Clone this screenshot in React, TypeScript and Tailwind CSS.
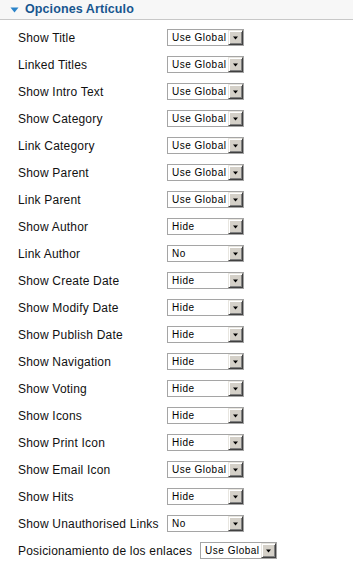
import * as React from 'react';

const rows: [string, string][] = [
    ['Show Title', 'Use Global'],
    ['Linked Titles', 'Use Global'],
    ['Show Intro Text', 'Use Global'],
    ['Show Category', 'Use Global'],
    ['Link Category', 'Use Global'],
    ['Show Parent', 'Use Global'],
    ['Link Parent', 'Use Global'],
    ['Show Author', 'Hide'],
    ['Link Author', 'No'],
    ['Show Create Date', 'Hide'],
    ['Show Modify Date', 'Hide'],
    ['Show Publish Date', 'Hide'],
    ['Show Navigation', 'Hide'],
    ['Show Voting', 'Hide'],
    ['Show Icons', 'Hide'],
    ['Show Print Icon', 'Hide'],
    ['Show Email Icon', 'Use Global'],
    ['Show Hits', 'Hide'],
    ['Show Unauthorised Links', 'No'],
];

function Select({ value }: { value: string }) {
    return (
        <div className="flex items-center w-[77px] h-[17px] border border-[#a5a5a5] bg-white">
            <span className="flex-1 pl-[4px] text-[10px] leading-none tracking-[0.5px] text-black truncate">
                {value}
            </span>
            <div className="flex items-center justify-center w-[15px] h-[15px] bg-[#d4d0c8] border-t border-l border-t-[#e8e6e0] border-l-[#e8e6e0] border-b border-r border-b-[#404040] border-r-[#404040] shadow-[inset_1px_1px_#ffffff,inset_-1px_-1px_#808080]">
                <svg width="7" height="4" viewBox="0 0 7 4">
                    <path d="M1 0.5h5L3.5 3.5z" fill="#000" />
                </svg>
            </div>
        </div>
    );
}

export default function App() {
    return (
        <div className="w-[353px] h-[563px] bg-white font-['Liberation_Sans',Arial,sans-serif] overflow-hidden">
            <div className="flex items-center h-[20px] bg-[#f7f7f7] border-b border-[#c8c8c8] pl-[10px]">
                <svg width="9" height="6" viewBox="0 0 9 6" className="mr-[6px]">
                    <path d="M0.5 0.5h8L4.5 5.5z" fill="#2a83c9" />
                </svg>
                <span className="text-[12.5px] font-bold text-[#17568f] tracking-[0.1px]">
                    Opciones Artículo
                </span>
            </div>

            <div className="pt-[4px] pl-[18px]">
                {rows.map(([label, value]) => (
                    <div key={label} className="flex items-center h-[27px]">
                        <div className="w-[149px] text-[12px] tracking-[0.2px] text-[#111]">{label}</div>
                        <Select value={value} />
                    </div>
                ))}
                <div className="flex items-center h-[27px]">
                    <div className="text-[12px] tracking-[0.2px] text-[#111] mr-[8px]">Posicionamiento de los enlaces</div>
                    <Select value="Use Global" />
                </div>
            </div>
        </div>
    );
}
